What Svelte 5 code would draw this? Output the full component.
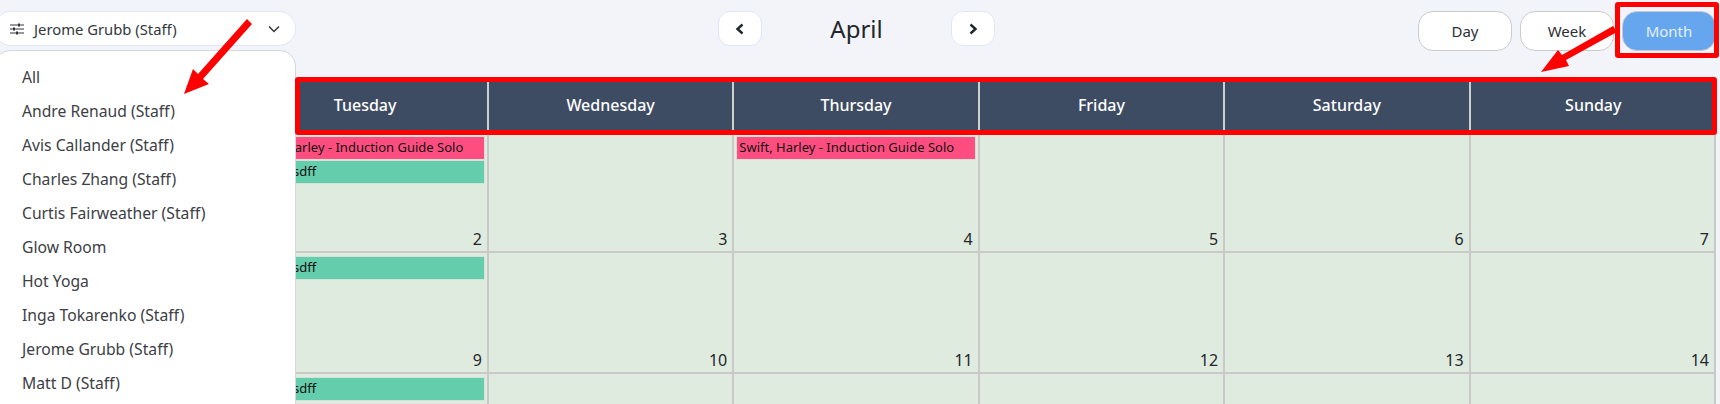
<script>
  const days = ['Monday', 'Tuesday', 'Wednesday', 'Thursday', 'Friday', 'Saturday', 'Sunday']
  const people = [
    'All', 'Andre Renaud (Staff)', 'Avis Callander (Staff)', 'Charles Zhang (Staff)',
    'Curtis Fairweather (Staff)', 'Glow Room', 'Hot Yoga', 'Inga Tokarenko (Staff)',
    'Jerome Grubb (Staff)', 'Matt D (Staff)'
  ]
  const induction = { text: 'Swift, Harley - Induction Guide Solo', kind: 'pink' }
  const asdff = { text: 'asdf adsdff', kind: 'green' }

  const events = {
    2: [induction, asdff],
    4: [induction],
    9: [asdff],
    16: [asdff]
  }
  const dates = Array.from({ length: 21 }, (_, i) => i + 1)
</script>

<div class="page">
  <header class="toolbar">
    <div class="nav">
      <button class="arrow" aria-label="Previous">
        <svg viewBox="0 0 12 14" width="12" height="14"><polyline points="8.5,2.5 3.5,7 8.5,11.5"/></svg>
      </button>
      <h1>April</h1>
      <button class="arrow" aria-label="Next">
        <svg viewBox="0 0 12 14" width="12" height="14"><polyline points="3.5,2.5 8.5,7 3.5,11.5"/></svg>
      </button>
    </div>
    <div class="views">
      <button class="view">Day</button>
      <button class="view">Week</button>
      <button class="view active">Month</button>
    </div>
  </header>

  <div class="calendar">
    <div class="head">
      {#each days as day}
        <div class="day">{day}</div>
      {/each}
    </div>
    <div class="grid">
      {#each dates as date}
        <div class="cell">
          {#each events[date] ?? [] as ev}
            <div class="event {ev.kind}">{ev.text}</div>
          {/each}
          <span class="date">{date}</span>
        </div>
      {/each}
    </div>
  </div>

  <div class="picker">
    <svg class="sliders" viewBox="0 0 14 12" width="14" height="12">
      <path d="M0 2h14M0 6h14M0 10h14"/>
      <path class="knob" d="M9 .6v2.8M4 4.6v2.8M7 8.6v2.8"/>
    </svg>
    <span class="picked">Jerome Grubb (Staff)</span>
    <svg class="chev" viewBox="0 0 12 8" width="12" height="8"><polyline points="1,1.5 6,6.5 11,1.5"/></svg>
  </div>

  <ul class="menu">
    {#each people as p}
      <li>{p}</li>
    {/each}
  </ul>

  <!-- annotations drawn on top of the screenshot -->
  <div class="mark mark-head"></div>
  <div class="mark mark-month"></div>
  <svg class="arrows" viewBox="0 0 1720 404" width="1720" height="404">
    <polygon points="247,19 252,24 203,79 209,84 184,94 193,69 198,74"/>
    <polygon points="1613,26 1617,32 1566,60 1569,66 1541,72 1558,50 1562,55"/>
  </svg>
</div>

<style>
  :global(body) {
    background: #f3f4fa;
    overflow: hidden;
  }

  .page {
    position: relative;
    width: 1720px;
    height: 404px;
    overflow: hidden;
    font-family: "Noto Sans", "Open Sans", sans-serif;
    color: #22262b;
  }

  .toolbar {
    height: 80px;
    box-sizing: border-box;
    padding: 11px 4px 0 718px;
    display: flex;
    justify-content: space-between;
    align-items: flex-start;
  }

  .nav {
    display: flex;
    align-items: center;
    width: 277px;
    justify-content: space-between;
  }

  h1 {
    margin: 0;
    font-size: 24px;
    font-weight: 400;
    line-height: 35px;
  }

  .arrow {
    width: 44px;
    height: 35px;
    padding: 0;
    background: #fff;
    border: 1px solid #e2e4fb;
    border-radius: 12px;
    display: flex;
    align-items: center;
    justify-content: center;
  }

  .arrow polyline {
    fill: none;
    stroke: #22262b;
    stroke-width: 2.4;
  }

  .views {
    display: flex;
    gap: 8px;
  }

  .view {
    width: 94px;
    height: 40px;
    padding: 0;
    background: #fff;
    border: 1px solid #cbcbcf;
    border-radius: 15px;
    font: inherit;
    font-size: 15px;
    color: #2c3036;
  }

  .view.active {
    background: #66a6ee;
    color: #e3effc;
  }

  .calendar {
    margin-left: -2px;
    width: 1718px;
  }

  .head {
    display: grid;
    grid-template-columns: repeat(7, 1fr);
    height: 53px;
    box-sizing: border-box;
    background: #3e4c63;
  }

  .day {
    display: flex;
    align-items: center;
    justify-content: center;
    padding-bottom: 3px;
    border-right: 2px solid #cfcfcf;
    color: #fff;
    font-size: 16px;
    font-weight: 500;
  }

  .day:last-child {
    border-right: 0;
  }

  .grid {
    display: grid;
    grid-template-columns: repeat(7, 1fr);
    grid-auto-rows: 120.4px;
  }

  .cell {
    position: relative;
    min-width: 0;
    box-sizing: border-box;
    padding: 3px 2px 0 2px;
    background: #e0ebe0;
    border-right: 2px solid #c9c9c9;
    border-bottom: 2px solid #c9c9c9;
    display: flex;
    flex-direction: column;
  }

  .event {
    height: 24px;
    box-sizing: border-box;
    padding-left: 2px;
    border: 1px solid #d6e2d8;
    font-size: 13px;
    line-height: 21px;
    color: #111;
    white-space: nowrap;
    overflow: hidden;
  }

  .pink { background: #ff4d80; }
  .green { background: #64cdab; }

  .date {
    position: absolute;
    right: 5px;
    bottom: 1px;
    font-size: 16px;
    line-height: 22px;
  }

  .picker {
    position: absolute;
    left: -6px;
    top: 11px;
    width: 302px;
    height: 35px;
    box-sizing: border-box;
    background: #fff;
    border: 1px solid #e2e4fb;
    border-radius: 17px;
    display: flex;
    align-items: center;
    padding-left: 15px;
    font-size: 14.8px;
    color: #33373c;
  }

  .sliders path {
    fill: none;
    stroke: #33373c;
    stroke-width: 1.1;
  }

  .sliders .knob {
    stroke-width: 2;
  }

  .picked {
    margin-left: 10px;
    flex: 1;
  }

  .chev {
    margin-right: 15px;
  }

  .chev polyline {
    fill: none;
    stroke: #33373c;
    stroke-width: 1.5;
  }

  .menu {
    position: absolute;
    left: -6px;
    top: 50px;
    width: 302px;
    height: 370px;
    box-sizing: border-box;
    margin: 0;
    padding: 9px 0 0 27px;
    list-style: none;
    background: #fff;
    border: 1px solid #d5d6de;
    border-radius: 16px;
    font-size: 15.7px;
    color: #3c4045;
  }

  .menu li {
    height: 34px;
    line-height: 34px;
  }

  .mark {
    position: absolute;
    box-sizing: border-box;
    border: 5px solid #ff0000;
    border-radius: 3px;
  }

  .mark-head {
    left: 295px;
    top: 77px;
    width: 1422px;
    height: 58px;
  }

  .mark-month {
    left: 1615px;
    top: 2px;
    width: 104px;
    height: 56px;
  }

  .arrows {
    position: absolute;
    left: 0;
    top: 0;
    fill: #ff0000;
    pointer-events: none;
  }
</style>
